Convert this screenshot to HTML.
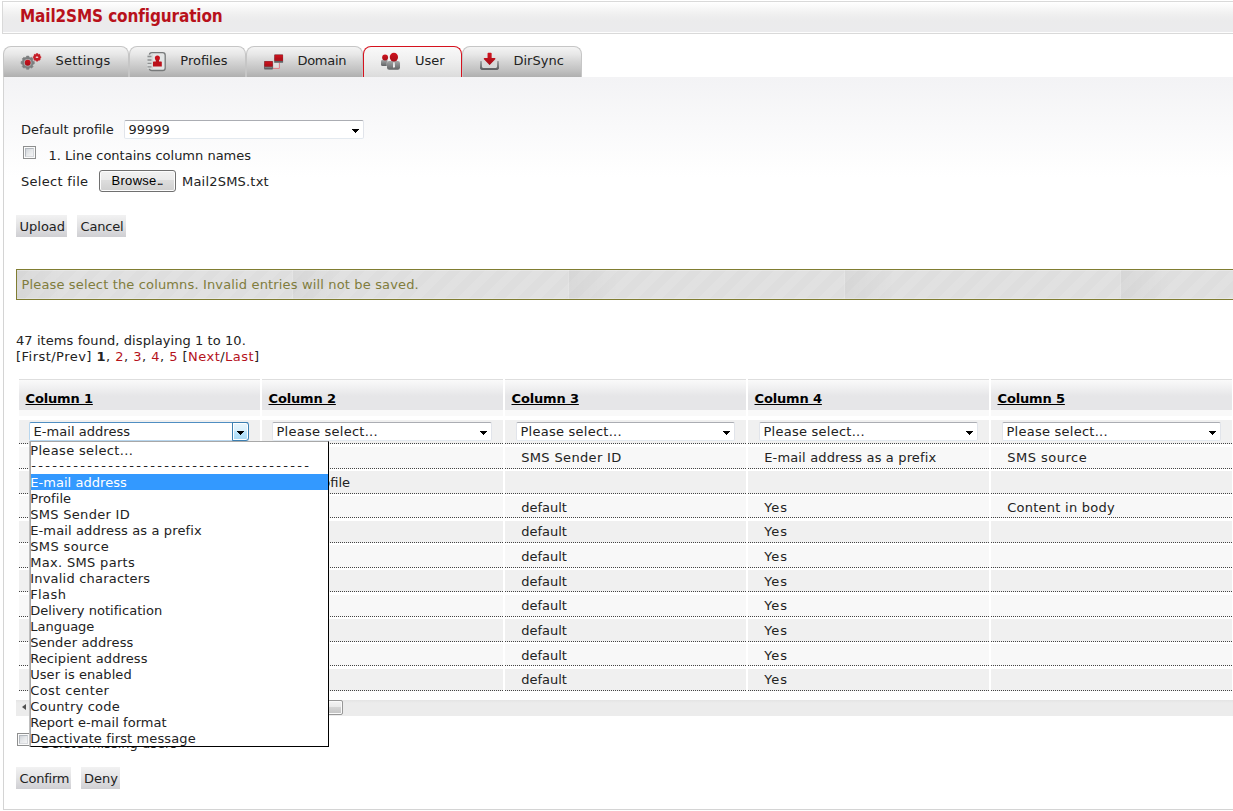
<!DOCTYPE html>
<html>
<head>
<meta charset="utf-8">
<title>Mail2SMS configuration</title>
<style>
html,body{margin:0;padding:0;background:#fff;}
body{width:1233px;height:811px;overflow:hidden;position:relative;font-family:"DejaVu Sans","Liberation Sans",sans-serif;font-size:13px;color:#222;}
.abs{position:absolute;}
.t{position:absolute;white-space:nowrap;line-height:16px;height:16px;}
#hdr{left:2px;top:1px;width:1240px;height:31px;border:1px solid #d9d9d9;background:linear-gradient(#ffffff 0%,#f7f7f7 20%,#efefef 42%,#ebebec 60%,#ebebed 100%);box-shadow:inset 0 -1px 0 #fdfdfd;}
#title{left:20px;top:6px;font-family:"DejaVu Sans Condensed","DejaVu Sans","Liberation Sans",sans-serif;font-weight:bold;font-size:17px;line-height:20px;height:20px;color:#b8111b;letter-spacing:-0.12px;}
#panel{left:3px;top:77px;width:1240px;height:732px;border-left:1px solid #d4d4d4;border-bottom:1px solid #d4d4d4;background:linear-gradient(#f3f3f5 0px,#ffffff 100px);}
.tab{position:absolute;top:46px;height:30px;border:1px solid #c6c6c6;border-bottom:none;border-radius:8px 8px 0 0;background:linear-gradient(#f4f4f4 0%,#e7e7e7 25%,#d4d4d4 50%,#c3c3c3 75%,#afafaf 100%);box-sizing:content-box;}
.tab.act{border-color:#d5121e;background:linear-gradient(#f9f9f9 0%,#f0f0f0 40%,#e6e6e6 72%,#dbdbdb 100%);}
.tab .lbl{position:absolute;top:6px;line-height:16px;white-space:nowrap;color:#222;}
.tab svg{position:absolute;}
.btn{position:absolute;height:22px;background:linear-gradient(#f2f2f2 0%,#e2e2e4 50%,#cfcfd3 100%);}
.btn span{position:absolute;left:3.5px;top:4px;line-height:16px;white-space:nowrap;}
.sel{position:absolute;height:17px;background:#fff;border:1px solid #e1e4ea;border-top-color:#abadb3;border-bottom-color:#e3e9ef;border-radius:2px;}
.sel span{position:absolute;left:3.5px;top:0px;line-height:17px;white-space:nowrap;letter-spacing:0.25px;}
.sel i{position:absolute;right:4px;top:8px;width:7px;height:4px;background:linear-gradient(#000,#000) 0 0/7px 1px no-repeat,linear-gradient(#000,#000) 1px 1px/5px 1px no-repeat,linear-gradient(#000,#000) 2px 2px/3px 1px no-repeat,linear-gradient(#000,#000) 3px 3px/1px 1px no-repeat;}
.cb{position:absolute;width:11px;height:11px;border:1px solid #8e8f8f;background:#fbfbfb;}
.cb:after{content:"";position:absolute;left:1px;top:1px;width:7px;height:7px;border:1px solid;border-color:#b3b8be #d4d7db #d9dbde #b3b8be;background:linear-gradient(135deg,#d0d4d9 0%,#e6e8ea 50%,#f4f4f5 100%);}
.th{position:absolute;top:379px;height:30px;border-top:1px solid #dedede;background:linear-gradient(#fafafa 0px,#f0f0f1 8px,#e6e6e8 16px,#e6e6e8 30px);}
.th span{position:absolute;left:6.5px;top:11px;line-height:16px;font-weight:bold;text-decoration:underline;color:#000;white-space:nowrap;letter-spacing:-0.15px;}
.ths{position:absolute;top:410px;height:6px;background:#f9f9f9;}
.c{position:absolute;border-bottom:1px dotted #444;}
.c.a{background:#f0f0f0;}
.c.b{background:#f8f8f8;}
.c > span{position:absolute;left:16.2px;top:4px;line-height:16px;white-space:nowrap;}
#dd{left:30px;top:441px;width:297px;height:304px;border:1px solid #000;border-top-color:#a8a8a8;border-left-color:#a6a6a6;box-shadow:-1px 0 0 #bfbfbf;background:#fff;z-index:10;overflow:hidden;}
#dd div{height:16px;line-height:18px;padding-left:0;text-indent:-0.8px;white-space:nowrap;color:#222;}
#dd div.s{background:#3399ff;color:#fff;}
.ic{position:absolute;overflow:visible;}
.sel.foc{border-color:#b7d6ee;border-top-color:#4f8ec2;border-bottom-color:#b7d6ee;}
.sel .ab{position:absolute;right:-1px;top:-1px;width:15px;height:17px;border:1px solid #3c7fb1;border-radius:0 3px 3px 0;box-shadow:inset 0 0 0 1px #fff;background:linear-gradient(#eaf6fd 0%,#d9f0fc 47%,#bee6fd 50%,#a7d9f5 100%);}
.sel .ab i{right:4px;top:8px;}
.c > span.pf{left:auto;right:153px;}
a{color:#b5121b;text-decoration:none;}
</style>
</head>
<body>
<div id="hdr" class="abs"></div>
<div id="title" class="t">Mail2SMS configuration</div>
<div id="panel" class="abs"></div>

<!-- tabs -->
<div class="tab" style="left:3px;width:124px;"><span class="lbl" style="left:51.5px;letter-spacing:0.2px;">Settings</span></div>
<div class="tab" style="left:129px;width:115px;"><span class="lbl" style="left:50.3px;">Profiles</span></div>
<div class="tab" style="left:246px;width:115px;"><span class="lbl" style="left:50.5px;letter-spacing:-0.3px;">Domain</span></div>
<div class="tab act" style="left:363px;width:97px;"><span class="lbl" style="left:51px;">User</span></div>
<div class="tab" style="left:462px;width:118px;"><span class="lbl" style="left:50.5px;">DirSync</span></div>

<!--icons-->
<svg class="ic" style="left:16px;top:48px;" width="30" height="28" viewBox="16 48 30 28"><defs>
<linearGradient id="gr" x1="0" y1="0" x2="0" y2="1"><stop offset="0" stop-color="#d0121d"/><stop offset="1" stop-color="#a50f19"/></linearGradient>
<linearGradient id="gg" x1="0" y1="0" x2="0" y2="1"><stop offset="0" stop-color="#a4a6a7"/><stop offset="1" stop-color="#606264"/></linearGradient>
</defs>
<path d="M29.14,68.11 L28.85,69.30 L26.55,69.30 L26.26,68.11 L24.89,67.54 L23.85,68.18 L22.22,66.55 L22.86,65.51 L22.29,64.14 L21.10,63.85 L21.10,61.55 L22.29,61.26 L22.86,59.89 L22.22,58.85 L23.85,57.22 L24.89,57.86 L26.26,57.29 L26.55,56.10 L28.85,56.10 L29.14,57.29 L30.51,57.86 L31.55,57.22 L33.18,58.85 L32.54,59.89 L33.11,61.26 L34.30,61.55 L34.30,63.85 L33.11,64.14 L32.54,65.51 L33.18,66.55 L31.55,68.18 L30.51,67.54Z" fill="#7d7f80" stroke="#7d7f80" stroke-width="0.6" stroke-linejoin="round"/>
<circle cx="27.7" cy="62.7" r="3.8" fill="#aeb0b1"/>
<circle cx="27.7" cy="62.7" r="2.95" fill="url(#gr)"/>
<path d="M37.97,60.47 L37.78,61.13 L36.32,61.13 L36.13,60.47 L35.46,60.19 L34.86,60.53 L33.82,59.49 L34.16,58.89 L33.88,58.22 L33.22,58.03 L33.22,56.57 L33.88,56.38 L34.16,55.71 L33.82,55.11 L34.86,54.07 L35.46,54.41 L36.13,54.13 L36.32,53.47 L37.78,53.47 L37.97,54.13 L38.64,54.41 L39.24,54.07 L40.28,55.11 L39.94,55.71 L40.22,56.38 L40.88,56.57 L40.88,58.03 L40.22,58.22 L39.94,58.89 L40.28,59.49 L39.24,60.53 L38.64,60.19Z" fill="#c4121d" stroke="#c4121d" stroke-width="0.5" stroke-linejoin="round" opacity="0.95"/>
<ellipse cx="37" cy="57.3" rx="1.4" ry="0.8" fill="#f6e4e5"/>
</svg>
<svg class="ic" style="left:141px;top:48px;" width="30" height="28" viewBox="141 48 30 28">
<rect x="149.4" y="52.6" width="15.8" height="17.9" rx="2.6" ry="2.6" fill="#e3e5e5" stroke="#77797a" stroke-width="1.3"/>
<rect x="151.8" y="53.3" width="1" height="16.5" fill="#cfd1d1" opacity="0.8"/>
<rect x="147.2" y="54.6" width="4.6" height="14.2" fill="#d9dbdb"/>
<g stroke="#8d8f90" stroke-width="1.35" stroke-linecap="butt"><path d="M147.5,56.5H151.5M147.5,59.95H151.5M147.5,63.4H151.5M147.5,66.85H151.5"/></g>
<circle cx="157.4" cy="58.1" r="2.55" fill="#c8121d"/>
<path d="M155.8,59.5H159V61.5H161.2Q161.8,61.5 161.8,62.1V66.4H153V62.1Q153,61.5 153.6,61.5H155.8Z" fill="#bb111b"/>
</svg>
<svg class="ic" style="left:259px;top:48px;" width="30" height="28" viewBox="259 48 30 28">
<rect x="273.6" y="62.8" width="6.3" height="6.1" fill="#f2eeee" opacity="0.5"/>
<path d="M272.8,68.4H279.4V62.8" fill="none" stroke="#de5f68" stroke-width="0.8"/>
<rect x="264.1" y="61" width="8.8" height="8.4" rx="0.6" fill="#5f6163"/>
<rect x="264.5" y="61.3" width="8.1" height="5.1" fill="#c6111c"/>
<rect x="264.5" y="63.8" width="8.1" height="2.6" fill="#a90f19" opacity="0.7"/>
<rect x="265" y="67.2" width="7" height="0.7" fill="#8b8d8e"/>
<rect x="274.2" y="54.4" width="8.9" height="8.4" rx="0.6" fill="#5f6163"/>
<rect x="274.6" y="54.7" width="8.2" height="6.1" fill="#c6111c"/>
<rect x="274.6" y="57.6" width="8.2" height="3.2" fill="#a90f19" opacity="0.7"/>
</svg>
<svg class="ic" style="left:376px;top:48px;" width="30" height="28" viewBox="376 48 30 28"><defs>
<linearGradient id="gr2" x1="0" y1="0" x2="0" y2="1"><stop offset="0" stop-color="#d0121d"/><stop offset="1" stop-color="#a50f19"/></linearGradient>
<linearGradient id="gg2" x1="0" y1="0" x2="0" y2="1"><stop offset="0" stop-color="#a4a6a7"/><stop offset="1" stop-color="#606264"/></linearGradient>
</defs>
<rect x="381" y="59.8" width="6.9" height="6.3" rx="1.6" fill="url(#gg2)"/>
<circle cx="385.1" cy="57.5" r="2.95" fill="url(#gr2)"/>
<rect x="386.6" y="60.8" width="13.9" height="9.2" rx="2.2" fill="#e9e9e9" opacity="0.6"/>
<rect x="387" y="61" width="13" height="8.8" rx="2.2" fill="url(#gg2)"/>
<path d="M393.3,62.2H394.6L394.9,66.6L393.9,68.2L393,66.6Z" fill="#f4f4f4"/>
<ellipse cx="393.9" cy="57.1" rx="4.15" ry="4.3" fill="url(#gr2)"/>
</svg>
<svg class="ic" style="left:474px;top:48px;" width="30" height="28" viewBox="474 48 30 28"><defs>
<linearGradient id="gr3" x1="0" y1="0" x2="0" y2="1"><stop offset="0" stop-color="#d0121d"/><stop offset="1" stop-color="#a50f19"/></linearGradient>
<linearGradient id="gg3" x1="0" y1="0" x2="0" y2="1"><stop offset="0" stop-color="#a4a6a7"/><stop offset="1" stop-color="#606264"/></linearGradient>
</defs>
<path d="M481,61.3V66.9Q481,68.9 483,68.9H496Q498,68.9 498,66.9V61.3" fill="#dcdddd" fill-opacity="0.7" stroke="url(#gg3)" stroke-width="2" stroke-linecap="butt"/>
<path d="M481,61.3V66.9Q481,68.9 483,68.9H496Q498,68.9 498,66.9V61.3" fill="none" stroke="url(#gg3)" stroke-width="2"/>
<path d="M488.3,53.6H490.9V58.7H494.7L489.6,64.1L484.5,58.7H488.3Z" fill="url(#gr3)" stroke="url(#gr3)" stroke-width="1.5" stroke-linejoin="round"/>
</svg>
<!--/icons-->
<!-- form -->
<div class="t" style="left:21px;top:122px;">Default profile</div>
<div class="sel" style="left:124px;top:120px;width:238px;"><span style="letter-spacing:0">99999</span><i></i></div>
<div class="cb" style="left:23px;top:146px;"></div>
<div class="t" style="left:48.5px;top:148px;">1. Line contains column names</div>
<div class="t" style="left:21px;top:174px;letter-spacing:0.3px;">Select file</div>
<div class="abs" id="browse" style="left:99px;top:170px;width:75px;height:20px;border:1px solid #707070;border-radius:3px;background:linear-gradient(#f2f2f2 0%,#ebebeb 43%,#dddddd 47%,#cfcfcf 100%);box-shadow:inset 0 0 0 1px #fcfcfc;"><span style="position:absolute;left:11.5px;top:2px;line-height:16px;font-family:'Liberation Sans',sans-serif;font-size:13px;color:#000;white-space:nowrap;letter-spacing:0.3px;">Browse<span style="letter-spacing:-1.9px;">...</span></span></div>
<div class="t" style="left:182px;top:174px;letter-spacing:0.2px;">Mail2SMS.txt</div>

<div class="btn" style="left:16px;top:215px;width:51px;"><span>Upload</span></div>
<div class="btn" style="left:77px;top:215px;width:49px;"><span style="letter-spacing:-0.2px">Cancel</span></div>

<!-- message -->
<div class="abs" id="msg" style="left:16px;top:269px;width:1240px;height:29px;border:1px solid #807d32;box-shadow:inset 0 1px 0 rgba(255,255,255,.28),inset 0 -1px 0 rgba(255,255,255,.28);background:repeating-linear-gradient(90deg,rgba(0,0,0,.035) 0px,rgba(0,0,0,0) 50px,rgba(0,0,0,0) 275px,rgba(255,255,255,.12) 275px,rgba(255,255,255,.12) 276px),repeating-linear-gradient(135deg,rgba(255,255,255,0) 0px,rgba(255,255,255,0) 8.5px,rgba(255,255,255,.09) 8.5px,rgba(255,255,255,.09) 17px) #dedede;"></div>
<div class="t" style="left:21.5px;top:277px;color:#807c3c;letter-spacing:0.15px;">Please select the columns. Invalid entries will not be saved.</div>

<!-- paging -->
<div class="t" style="left:16px;top:333px;letter-spacing:0.08px;">47 items found, displaying 1 to 10.</div>
<div class="t" style="left:16px;top:349px;letter-spacing:0.47px;">[First/Prev] <b>1</b>, <a>2</a>, <a>3</a>, <a>4</a>, <a>5</a> [<a>Next</a>/<a>Last</a>]</div>

<div id="tbl">
<div class="th" style="left:19px;width:241px;"><span>Column 1</span></div>
<div class="ths" style="left:19px;width:241px;"></div>
<div class="th" style="left:262px;width:241px;"><span>Column 2</span></div>
<div class="ths" style="left:262px;width:241px;"></div>
<div class="th" style="left:505px;width:241px;"><span>Column 3</span></div>
<div class="ths" style="left:505px;width:241px;"></div>
<div class="th" style="left:748px;width:241px;"><span>Column 4</span></div>
<div class="ths" style="left:748px;width:241px;"></div>
<div class="th" style="left:991px;width:241px;"><span>Column 5</span></div>
<div class="ths" style="left:991px;width:241px;"></div>
<div class="c a" style="left:19px;top:420px;width:241px;height:23px;"><div class="sel foc" style="left:10px;top:2px;width:218px;"><span style="letter-spacing:0.05px">E-mail address</span><b class="ab"><i></i></b></div></div>
<div class="c a" style="left:262px;top:420px;width:241px;height:23px;"><div class="sel" style="left:10px;top:2px;width:218px;"><span>Please select...</span><i></i></div></div>
<div class="c a" style="left:505px;top:420px;width:241px;height:23px;"><div class="sel" style="left:11px;top:2px;width:217px;"><span>Please select...</span><i></i></div></div>
<div class="c a" style="left:748px;top:420px;width:241px;height:23px;"><div class="sel" style="left:11px;top:2px;width:217px;"><span>Please select...</span><i></i></div></div>
<div class="c a" style="left:991px;top:420px;width:241px;height:23px;"><div class="sel" style="left:11px;top:2px;width:217px;"><span>Please select...</span><i></i></div></div>
<div class="c b" style="left:19px;top:447px;width:241px;height:21px;"><span style="top:3px;">E-mail address</span></div>
<div class="c b" style="left:262px;top:447px;width:241px;height:21px;"><span style="top:3px;">Profile</span></div>
<div class="c b" style="left:505px;top:447px;width:241px;height:21px;"><span style="top:3px;letter-spacing:0.35px;">SMS Sender ID</span></div>
<div class="c b" style="left:748px;top:447px;width:241px;height:21px;"><span style="top:3px;letter-spacing:0.15px;">E-mail address as a prefix</span></div>
<div class="c b" style="left:991px;top:447px;width:241px;height:21px;"><span style="top:3px;letter-spacing:0.5px;">SMS source</span></div>
<div class="c a" style="left:19px;top:471px;width:241px;height:22px;"></div>
<div class="c a" style="left:262px;top:471px;width:241px;height:22px;"><span class="pf" style="top:4px">Standardprofile</span></div>
<div class="c a" style="left:505px;top:471px;width:241px;height:22px;"></div>
<div class="c a" style="left:748px;top:471px;width:241px;height:22px;"></div>
<div class="c a" style="left:991px;top:471px;width:241px;height:22px;"></div>
<div class="c b" style="left:19px;top:496px;width:241px;height:21px;"></div>
<div class="c b" style="left:262px;top:496px;width:241px;height:21px;"></div>
<div class="c b" style="left:505px;top:496px;width:241px;height:21px;"><span style="top:4px;">default</span></div>
<div class="c b" style="left:748px;top:496px;width:241px;height:21px;"><span style="top:4px;letter-spacing:0.9px;">Yes</span></div>
<div class="c b" style="left:991px;top:496px;width:241px;height:21px;"><span style="top:4px;letter-spacing:0.25px;">Content in body</span></div>
<div class="c a" style="left:19px;top:521px;width:241px;height:21px;"></div>
<div class="c a" style="left:262px;top:521px;width:241px;height:21px;"></div>
<div class="c a" style="left:505px;top:521px;width:241px;height:21px;"><span style="top:3px;">default</span></div>
<div class="c a" style="left:748px;top:521px;width:241px;height:21px;"><span style="top:3px;letter-spacing:0.9px;">Yes</span></div>
<div class="c a" style="left:991px;top:521px;width:241px;height:21px;"></div>
<div class="c b" style="left:19px;top:545px;width:241px;height:22px;"></div>
<div class="c b" style="left:262px;top:545px;width:241px;height:22px;"></div>
<div class="c b" style="left:505px;top:545px;width:241px;height:22px;"><span style="top:4px;">default</span></div>
<div class="c b" style="left:748px;top:545px;width:241px;height:22px;"><span style="top:4px;letter-spacing:0.9px;">Yes</span></div>
<div class="c b" style="left:991px;top:545px;width:241px;height:22px;"></div>
<div class="c a" style="left:19px;top:570px;width:241px;height:21px;"></div>
<div class="c a" style="left:262px;top:570px;width:241px;height:21px;"></div>
<div class="c a" style="left:505px;top:570px;width:241px;height:21px;"><span style="top:4px;">default</span></div>
<div class="c a" style="left:748px;top:570px;width:241px;height:21px;"><span style="top:4px;letter-spacing:0.9px;">Yes</span></div>
<div class="c a" style="left:991px;top:570px;width:241px;height:21px;"></div>
<div class="c b" style="left:19px;top:595px;width:241px;height:21px;"></div>
<div class="c b" style="left:262px;top:595px;width:241px;height:21px;"></div>
<div class="c b" style="left:505px;top:595px;width:241px;height:21px;"><span style="top:3px;">default</span></div>
<div class="c b" style="left:748px;top:595px;width:241px;height:21px;"><span style="top:3px;letter-spacing:0.9px;">Yes</span></div>
<div class="c b" style="left:991px;top:595px;width:241px;height:21px;"></div>
<div class="c a" style="left:19px;top:619px;width:241px;height:22px;"></div>
<div class="c a" style="left:262px;top:619px;width:241px;height:22px;"></div>
<div class="c a" style="left:505px;top:619px;width:241px;height:22px;"><span style="top:4px;">default</span></div>
<div class="c a" style="left:748px;top:619px;width:241px;height:22px;"><span style="top:4px;letter-spacing:0.9px;">Yes</span></div>
<div class="c a" style="left:991px;top:619px;width:241px;height:22px;"></div>
<div class="c b" style="left:19px;top:644px;width:241px;height:21px;"></div>
<div class="c b" style="left:262px;top:644px;width:241px;height:21px;"></div>
<div class="c b" style="left:505px;top:644px;width:241px;height:21px;"><span style="top:4px;">default</span></div>
<div class="c b" style="left:748px;top:644px;width:241px;height:21px;"><span style="top:4px;letter-spacing:0.9px;">Yes</span></div>
<div class="c b" style="left:991px;top:644px;width:241px;height:21px;"></div>
<div class="c a" style="left:19px;top:669px;width:241px;height:21px;"></div>
<div class="c a" style="left:262px;top:669px;width:241px;height:21px;"></div>
<div class="c a" style="left:505px;top:669px;width:241px;height:21px;"><span style="top:3px;">default</span></div>
<div class="c a" style="left:748px;top:669px;width:241px;height:21px;"><span style="top:3px;letter-spacing:0.9px;">Yes</span></div>
<div class="c a" style="left:991px;top:669px;width:241px;height:21px;"></div>
<div class="abs" id="sb" style="left:16px;top:700px;width:1230px;height:16px;background:linear-gradient(#e4e4e4 0px,#ececec 3px,#ececec 16px);"><i style="position:absolute;left:6px;top:4px;width:0;height:0;border-top:3.5px solid transparent;border-bottom:3.5px solid transparent;border-right:4px solid #505050;"></i><div style="position:absolute;left:17px;top:0;width:308px;height:13px;border:1px solid #979797;border-radius:2px;background:linear-gradient(#f4f4f4 0%,#eaeaea 45%,#d4d4d4 50%,#c4c4c4 100%);box-shadow:inset 0 0 0 1px #fafafa;"></div></div>
</div><!--/tbl-->

<!-- dropdown -->
<div id="dd" class="abs">
<div style="letter-spacing:0.35px">Please select...</div>
<div style="letter-spacing:2.31px;text-indent:0.3px;line-height:16px;">----------------------------------------</div>
<div class="s" style="letter-spacing:0.05px">E-mail address</div>
<div style="letter-spacing:0.08px">Profile</div>
<div style="letter-spacing:0.3px">SMS Sender ID</div>
<div style="letter-spacing:0.13px">E-mail address as a prefix</div>
<div style="letter-spacing:0.39px">SMS source</div>
<div style="letter-spacing:0.32px">Max. SMS parts</div>
<div style="letter-spacing:0.21px">Invalid characters</div>
<div style="letter-spacing:0.4px">Flash</div>
<div style="letter-spacing:0.04px">Delivery notification</div>
<div style="letter-spacing:0px">Language</div>
<div style="letter-spacing:0.14px">Sender address</div>
<div style="letter-spacing:0.1px">Recipient address</div>
<div style="letter-spacing:0.06px">User is enabled</div>
<div style="letter-spacing:0.38px">Cost center</div>
<div style="letter-spacing:0.22px">Country code</div>
<div style="letter-spacing:0.065px">Report e-mail format</div>
<div style="letter-spacing:0.12px">Deactivate first message</div>
</div>

<!-- bottom -->
<div class="cb" style="left:17px;top:733px;"></div>
<div class="t" style="left:41px;top:736px;">Delete missing users</div>
<div class="btn" style="left:16px;top:767px;width:55px;"><span style="letter-spacing:-0.2px">Confirm</span></div>
<div class="btn" style="left:81px;top:767px;width:39px;"><span style="left:3px">Deny</span></div>
</body>
</html>
